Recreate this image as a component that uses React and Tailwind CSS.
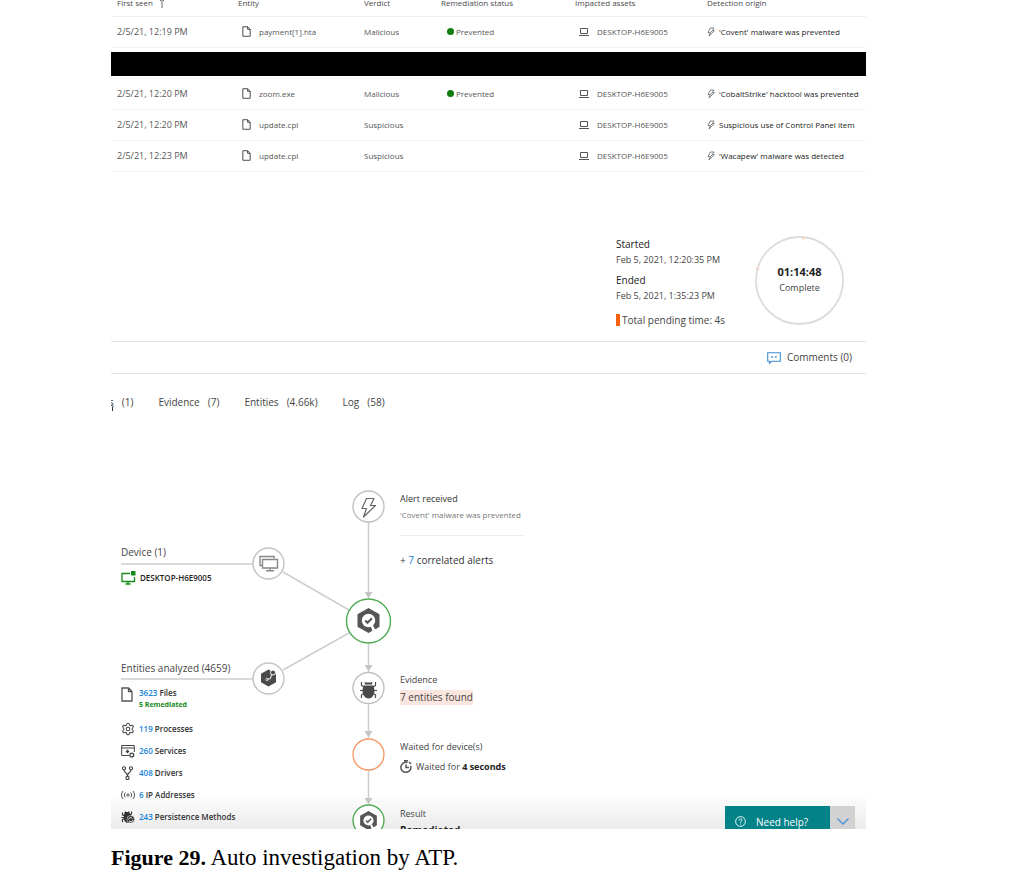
import { Settings } from "lucide-react";

const alerts = [
  { seen: "2/5/21, 12:19 PM", entity: "payment[1].hta", verdict: "Malicious", status: "Prevented", origin: "'Covent' malware was prevented" },
  { redacted: true },
  { seen: "2/5/21, 12:20 PM", entity: "zoom.exe", verdict: "Malicious", status: "Prevented", origin: "'CobaltStrike' hacktool was prevented" },
  { seen: "2/5/21, 12:20 PM", entity: "update.cpl", verdict: "Suspicious", status: "", origin: "Suspicious use of Control Panel item" },
  { seen: "2/5/21, 12:23 PM", entity: "update.cpl", verdict: "Suspicious", status: "", origin: "'Wacapew' malware was detected" },
];

function FileIcon({ className }) {
  return (
    <svg viewBox="0 0 12 15" className={className} fill="none" stroke="currentColor" strokeWidth="1.3" aria-hidden="true">
      <path d="M1 1h6.500l3.500 3.500V14H1z M7.500 1v3.500H11" />
    </svg>
  );
}

function LaptopIcon() {
  return (
    <svg viewBox="0 0 10 8" className="h-2 w-2.5 shrink-0" fill="none" stroke="#555" aria-hidden="true">
      <path d="M1.500 5.500V.5h7v5zM0 7.500h10" />
    </svg>
  );
}

function SmallBolt() {
  return (
    <svg viewBox="0 0 24 28" className="h-2.5 w-2 shrink-0" fill="none" stroke="#555" strokeWidth="2.200" strokeLinejoin="round" aria-hidden="true">
      <path d="M10 2h11l-5 8h6L6 26l4-10H3z M16 10l-6 6" />
    </svg>
  );
}

function AlertsTable() {
  const th = "pt-1.5 pl-1.5 text-left font-normal whitespace-nowrap";
  const td = "pl-1.5 whitespace-nowrap";
  return (
    <div className="overflow-hidden">
      <table className="-mt-[15px] w-full table-fixed border-collapse text-[8px] leading-3 text-[#555]">
        <colgroup>
          <col className="w-[121px]" />
          <col className="w-[126px]" />
          <col className="w-[77px]" />
          <col className="w-[134px]" />
          <col className="w-[132px]" />
          <col />
        </colgroup>
        <thead>
          <tr className="h-[31px] border-b border-[#efefef] text-[#4a4a4a]">
            <th className={th}>
              <span className="flex items-center gap-1.5">
                First seen
                <svg viewBox="0 0 6 10" className="h-2.5 w-1.5" fill="none" stroke="#555" strokeWidth=".9" aria-hidden="true">
                  <path d="M3 10V1M1 3l2-2 2 2" />
                </svg>
              </span>
            </th>
            <th className={th}>Entity</th>
            <th className={th}>Verdict</th>
            <th className={th}>Remediation status</th>
            <th className={th}>Impacted assets</th>
            <th className={th}>Detection origin</th>
          </tr>
        </thead>
        <tbody>
          {alerts.map((row, i) =>
            row.redacted ? (
              <tr key={i} className="h-[31px] border-b border-[#f3f3f3]">
                <td colSpan={6} className="pt-0.5"><div className="h-6 bg-black" /></td>
              </tr>
            ) : (
              <tr key={i} className="h-[31px] border-b border-[#f3f3f3]">
                <td className={td + " text-[9px]"}>{row.seen}</td>
                <td className={td}>
                  <span className="flex items-center gap-2 pl-1">
                    <FileIcon className="h-[11px] w-[9px] shrink-0 text-[#444]" />
                    {row.entity}
                  </span>
                </td>
                <td className={td}>{row.verdict}</td>
                <td className={td}>
                  {row.status && (
                    <span className="flex items-center gap-0.5 pl-1.5">
                      <span className="size-[7px] rounded-full bg-[#107c10]" />
                      {row.status}
                    </span>
                  )}
                </td>
                <td className={td}>
                  <span className="flex items-center gap-2 pl-1">
                    <LaptopIcon />
                    DESKTOP-H6E9005
                  </span>
                </td>
                <td className={td + " text-[#222]"}>
                  <span className="flex items-center gap-1">
                    <SmallBolt />
                    {row.origin}
                  </span>
                </td>
              </tr>
            )
          )}
        </tbody>
      </table>
    </div>
  );
}

function Summary() {
  return (
    <section className="flex h-[169px] items-start justify-end gap-7 pt-16 pr-[22px] text-[10px] leading-[15px] text-[#444]">
      <dl className="w-[111px] pt-px text-[9px] whitespace-nowrap">
        <dt className="text-[10px] text-[#222]">Started</dt>
        <dd>Feb 5, 2021, 12:20:35 PM</dd>
        <dt className="mt-1.5 text-[10px] text-[#222]">Ended</dt>
        <dd>Feb 5, 2021, 1:35:23 PM</dd>
        <div className="mt-2.5 flex items-center gap-0.5 text-[10px]">
          <span className="h-3 w-1 bg-[#f7630c]" />
          Total pending time: 4s
        </div>
      </dl>
      <div className="relative grid size-[89px] place-content-center text-center leading-4">
        <svg viewBox="0 0 89 89" className="absolute inset-0 size-full" fill="none" aria-hidden="true">
          <circle cx="44.500" cy="44.500" r="43.500" stroke="#dcdcdc" strokeWidth="1.800" />
          <path d="M48.500 0v4M.5 32.500l4 1" stroke="#fbd0b5" />
        </svg>
        <strong className="text-[11px] font-bold text-[#222]">01:14:48</strong>
        <span className="text-[9px]">Complete</span>
      </div>
    </section>
  );
}

function Tab({ label, count }) {
  return (
    <button type="button" className="flex gap-2">
      {label}
      <span>({count})</span>
    </button>
  );
}

function ShieldSearch({ x, y, scale }) {
  return (
    <g transform={`translate(${x} ${y}) scale(${scale})`}>
      <path d="M0-12.500L11-6.300V6.300L0 12.500-11 6.300V-6.300z" fill="#555" />
      <circle r="6.700" fill="#fff" />
      <path d="M3.500 5L6 11.500" stroke="#fff" strokeWidth="3" />
      <path d="M5.500 4.500L8 8" stroke="#555" strokeWidth="2.500" />
      <path d="M-3.300 0l2.300 2.300L3.500-2.300" fill="none" stroke="#555" strokeWidth="2" />
    </g>
  );
}

function Graph() {
  return (
    <svg viewBox="111 430 755 399" className="absolute top-0 left-0 h-[399px] w-[755px]" fill="none" aria-hidden="true">
      <g stroke="#cecece" strokeWidth="1.500">
        <path d="M368.500 522v76M368.500 643v29M368.500 704v34M368.500 770v34" />
        <path d="M121 564h132M121 679h132M283 572l66 38M283 670l66-37" />
      </g>
      <g fill="#c4c4c4">
        <path d="M364.500 592h8l-4 6zM364.500 665h8l-4 6zM364.500 731h8l-4 6zM364.500 798h8l-4 6z" />
      </g>
      <g fill="#fff" strokeWidth="1.400">
        <circle cx="368.500" cy="506.500" r="15.500" stroke="#c0c0c0" />
        <circle cx="368.500" cy="621" r="22" stroke="#52ab57" />
        <circle cx="368.500" cy="688" r="15.500" stroke="#c0c0c0" />
        <circle cx="368.500" cy="754.500" r="15.500" stroke="#f79863" />
        <circle cx="368.500" cy="820.500" r="15.500" stroke="#52ab57" />
        <circle cx="268.500" cy="563.500" r="15.500" stroke="#c4c4c4" />
        <circle cx="268.500" cy="678.500" r="15.500" stroke="#c4c4c4" />
      </g>

      <path d="M366.500 498.500h7.500l-3.500 7h5l-12 11.500 3-8.500H362z" stroke="#666" strokeWidth="1.200" strokeLinejoin="round" />
      <ShieldSearch x={368.5} y={620.5} scale={1} />
      <ShieldSearch x={368.5} y={820.5} scale={0.76} />

      <g stroke="#888" strokeWidth="1.400">
        <path d="M262 565.500h-2v-9h14v2" />
        <path d="M262.500 559.500h15v8.500h-15zM270 568v2.500M266 570.800h8" />
      </g>

      <g>
        <path d="M268.500 669.500l7.500 4.200v8.600l-7.500 4.200-7.500-4.200v-8.600z" fill="#4a4a4a" />
        <circle cx="273" cy="672.500" r="2.500" fill="#4a4a4a" stroke="#fff" />
        <path d="M271.500 674.500l-1 4-3 1" stroke="#fff" />
        <circle cx="267" cy="679.500" r="1.200" stroke="#fff" strokeWidth=".7" />
      </g>

      <g>
        <path d="M364.800 681.500l1 1h5.400l1-1v3h-7.400z" fill="#4a4a4a" />
        <path d="M363.500 685.500h10l1 4.500c0 5-2.700 8.500-6 8.500s-6-3.500-6-8.500z" fill="#4a4a4a" />
        <path d="M361.500 682v3.500l3 2M375.500 682v3.500l-3 2M360 690.500h17M361.500 698v-3l3-2M375.500 698v-3l-3-2" stroke="#4a4a4a" strokeWidth="1.200" />
      </g>
    </svg>
  );
}

const iconBox = "size-3.5 shrink-0";

function GearIcon() {
  return <Settings className={iconBox + " text-[#444]"} strokeWidth={1.8} aria-hidden="true" />;
}

function ServiceIcon() {
  return (
    <svg viewBox="0 0 14 14" className={iconBox} fill="none" stroke="#444" aria-hidden="true">
      <path d="M8 11.500H.7V1.500h12.600V8M.7 4h12.600" />
      <path d="M6.500 5.800v3.400M4.800 7.500h3.400" strokeWidth="1.500" />
      <circle cx="10.800" cy="11" r="1.900" strokeWidth="1.300" />
    </svg>
  );
}

function DriverIcon() {
  return (
    <svg viewBox="0 0 14 14" className={iconBox} fill="none" stroke="#444" strokeWidth="1.100" aria-hidden="true">
      <circle cx="3" cy="2.300" r="1.600" />
      <circle cx="10" cy="2.300" r="1.600" />
      <circle cx="6.500" cy="12" r="1.600" />
      <path d="M3 4c0 3 3.500 2 3.500 6.200M10 4c0 3-3.500 2-3.500 6.200" />
    </svg>
  );
}

function IpIcon() {
  return (
    <svg viewBox="0 0 14 14" className={iconBox} fill="none" stroke="#555" strokeWidth="1" aria-hidden="true">
      <circle cx="7" cy="7" r="1.200" />
      <path d="M4.300 4.500c-1.200 1.500-1.200 3.500 0 5M9.700 4.500c1.200 1.500 1.200 3.500 0 5M2 3C0 5.500 0 8.500 2 11M12 3c2 2.500 2 5.500 0 8" />
    </svg>
  );
}

function PersistenceIcon() {
  return (
    <svg viewBox="0 0 14 14" className={iconBox} aria-hidden="true">
      <path d="M4 1l1 1h2l1-1 .5 2L10 4.500V8l-2 5-3-.5L3 10V4.500z" fill="#333" />
      <path d="M1.500 2.500V5l2 1M.5 7.500H3M1.500 12V9.500l2-1M10.500 1.500V4l-2 1" fill="none" stroke="#333" strokeWidth="1.200" />
      <circle cx="9.700" cy="9.300" r="3.800" fill="#333" stroke="#fff" strokeWidth=".5" />
      <path d="M7.500 9.500c.3-2 3-2.500 4-.8M12 10c-.3 2-3 2.300-4 .8" fill="none" stroke="#fff" strokeWidth=".9" />
    </svg>
  );
}

const entities = [
  { icon: GearIcon, count: 119, label: "Processes" },
  { icon: ServiceIcon, count: 260, label: "Services" },
  { icon: DriverIcon, count: 408, label: "Drivers" },
  { icon: IpIcon, count: 6, label: "IP Addresses" },
  { icon: PersistenceIcon, count: 243, label: "Persistence Methods" },
];

function Diagram() {
  return (
    <section className="relative h-[399px] overflow-hidden text-[10px] leading-4 text-[#444]">
      <div className="absolute inset-x-0 bottom-0 h-9 bg-linear-to-b from-white to-[#ebebeb]" />
      <Graph />

      <div className="absolute top-[61px] left-[289px] w-[124px]">
        <h2 className="text-[9px] text-[#333]">Alert received</h2>
        <p className="text-[8px] whitespace-nowrap text-[#777]">'Covent' malware was prevented</p>
        <p className="mt-3 border-t border-[#ececec] pt-4 whitespace-nowrap text-[#333]">
          + <a href="#alerts" className="text-[#1683d8]">7</a> correlated alerts
        </p>
      </div>

      <div className="absolute top-[114px] left-2.5">
        <h2>Device (1)</h2>
        <p className="mt-2.5 flex items-center gap-1 text-[8px] font-semibold text-[#222]">
          <svg viewBox="0 0 15 14" className="h-3.5 w-[15px]" fill="none" stroke="#168a1c" strokeWidth="1.300" aria-hidden="true">
            <path d="M9 2.500H1v8h12.500V6M7 10.500V13M4.500 13h5" />
            <path d="M10 0h4.500v4.500H10z" fill="#168a1c" stroke="none" />
          </svg>
          DESKTOP-H6E9005
        </p>
      </div>

      <div className="absolute top-[230px] left-2.5 text-[8px] font-semibold text-[#333]">
        <h2 className="text-[10px] font-normal text-[#444]">Entities analyzed (4659)</h2>
        <div className="mt-[11px] flex gap-1.5">
          <FileIcon className="h-[15px] w-3 shrink-0 text-[#555]" />
          <div className="leading-3">
            <p><a href="#files" className="text-[#1683d8]">3623</a> Files</p>
            <p className="text-[7px] font-bold text-[#168a1c]">5 Remediated</p>
          </div>
        </div>
        <ul className="mt-[7px]">
          {entities.map(({ icon: Icon, count, label }) => (
            <li key={label} className="flex h-[22px] items-center gap-1 whitespace-nowrap">
              <Icon />
              <span><a href="#entities" className="text-[#1683d8]">{count}</a> {label}</span>
            </li>
          ))}
        </ul>
      </div>

      <div className="absolute top-[242px] left-[289px]">
        <h2 className="text-[9px]">Evidence</h2>
        <p className="mt-0.5 bg-[#fbe6df] leading-[15px] whitespace-nowrap">7 entities found</p>
      </div>

      <div className="absolute top-[309px] left-[289px] text-[9px]">
        <h2>Waited for device(s)</h2>
        <p className="mt-1 flex items-center gap-1 whitespace-nowrap">
          <svg viewBox="0 0 12 13" className="h-[13px] w-3" fill="none" stroke="#555" strokeWidth="1.500" aria-hidden="true">
            <path d="M7.500 2.600A5 5 0 1 0 10.700 6M4 .7h4M6 4.500v3h3M9 2l2 2" />
          </svg>
          <span>Waited for <b className="text-[#222]">4 seconds</b></span>
        </p>
      </div>

      <div className="absolute top-[376px] left-[289px]">
        <h2 className="text-[9px]">Result</h2>
        <p className="font-bold text-[#222]">Remediated</p>
      </div>

      <div className="absolute top-[376px] right-[11px] flex h-8">
        <button type="button" className="flex w-[105px] items-center gap-2.5 bg-[#038387] pl-2.5 text-white">
          <svg viewBox="0 0 12 12" className="size-[11px]" fill="none" stroke="currentColor" aria-hidden="true">
            <circle cx="6" cy="6" r="5.300" />
            <path d="M4.500 4.800c0-2.200 3-2 3-.2 0 1.200-1.500 1.200-1.500 2.600M6 8.200v1" />
          </svg>
          Need help?
        </button>
        <button type="button" aria-label="Collapse help" className="grid w-[25px] place-items-center bg-[#d2d2d2]">
          <svg viewBox="0 0 12 7" className="h-[7px] w-3" fill="none" stroke="#4a90d9" strokeWidth="1.300" aria-hidden="true">
            <path d="M.5.500L6 6 11.500.500" />
          </svg>
        </button>
      </div>
    </section>
  );
}

export default function App() {
  return (
    <main className="bg-white pr-[147px] pl-[111px]">
      <figure>
        <div className="font-['Open_Sans',sans-serif]">
          <AlertsTable />
          <Summary />
          <div className="flex h-[33px] items-center justify-end border-y border-[#e2e2e2] pt-px pr-3.5 text-[10px] text-[#444]">
            <button type="button" className="flex items-center gap-1.5">
              <svg viewBox="0 0 14 12" className="h-3 w-3.5" fill="none" stroke="#3a8bd0" strokeWidth="1.100" aria-hidden="true">
                <path d="M.7.700h12.600v8.600H4.500l-2 2v-2H.7z" />
                <path d="M4.300 5h1.800M7.900 5h1.800" strokeWidth="1.700" />
              </svg>
              Comments (0)
            </button>
          </div>
          <div className="relative overflow-hidden">
            <nav className="-ml-0.5 flex h-14 items-center gap-[25px] pt-0.5 text-[10px] text-[#444]">
              <Tab label="s" count="1" />
              <Tab label="Evidence" count="7" />
              <Tab label="Entities" count="4.66k" />
              <Tab label="Log" count="58" />
            </nav>
            <svg viewBox="0 0 4 12" className="absolute top-[26px] left-0 h-3 w-1" fill="none" stroke="#333" aria-hidden="true">
              <path d="M0 5l2.500 1.500M1.500 7v4" />
            </svg>
          </div>
          <Diagram />
        </div>
        <figcaption className="pt-[13px] pb-2 font-['Liberation_Serif',serif] text-[23px] leading-8 text-black">
          <b className="text-[22px]">Figure 29.</b> Auto investigation by ATP.
        </figcaption>
      </figure>
    </main>
  );
}
